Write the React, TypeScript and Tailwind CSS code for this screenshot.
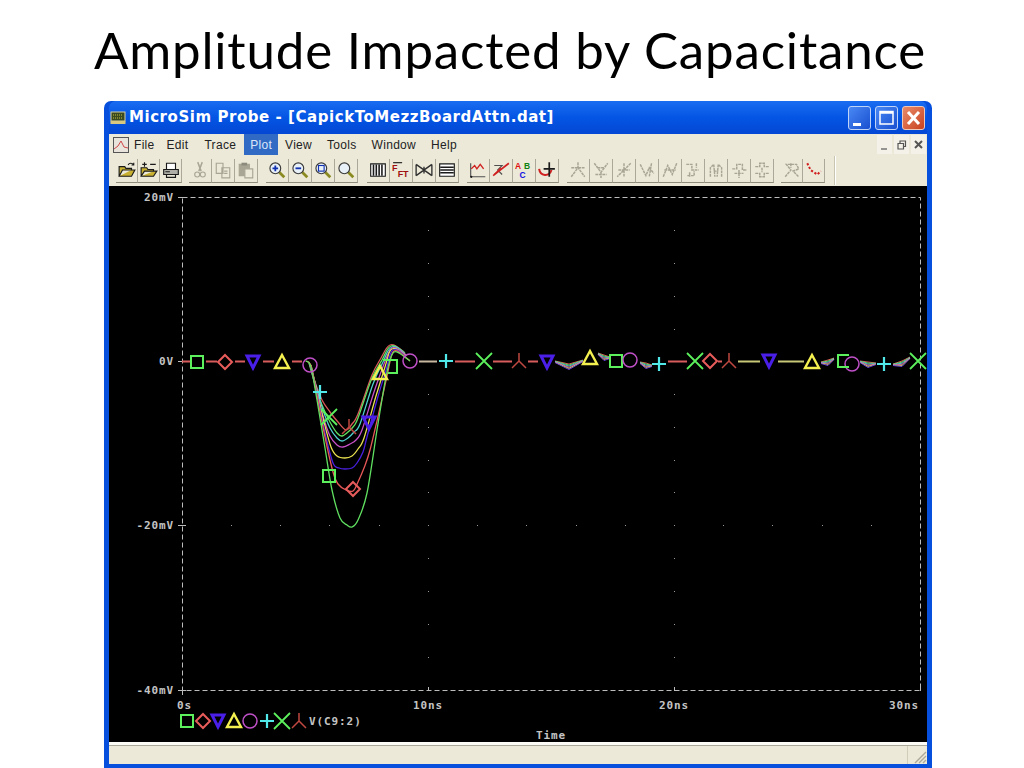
import type { ReactNode } from 'react'

const MONO = "font-['DejaVu_Sans_Mono','Liberation_Mono',monospace]"
const ICON_TEXT = "font-['Liberation_Sans',sans-serif] font-bold"

// plot colours, sampled from the screenshot
const GREEN = '#5cf05c'
const RED = '#e85c5c'
const BLUE = '#4a1fe8'
const YELLOW = '#f4f050'
const MAGENTA = '#c050c8'
const CYAN = '#50e8e8'

type MarkerKind = 'square' | 'diamond' | 'down' | 'up' | 'circle' | 'plus' | 'x' | 'y'

const MARKER_COLORS: Record<MarkerKind, string> = {
  square: GREEN,
  diamond: RED,
  down: BLUE,
  up: YELLOW,
  circle: MAGENTA,
  plus: CYAN,
  x: GREEN,
  y: '#c04840',
}

const MARKERS: [MarkerKind, number, number][] = [
  ['square', 197, 362],
  ['diamond', 225, 362],
  ['down', 253, 362],
  ['up', 282, 362],
  ['circle', 310, 365],
  ['plus', 320, 392],
  ['x', 329, 417],
  ['y', 349, 427],
  ['down', 369, 423],
  ['up', 380, 373],
  ['square', 329, 476],
  ['diamond', 353, 489],
  ['circle', 410, 361],
  ['plus', 446, 361],
  ['x', 484, 361],
  ['y', 519, 361],
  ['down', 547, 362],
  ['up', 590, 358],
  ['square', 616, 361],
  ['circle', 630, 360],
  ['plus', 659, 364],
  ['x', 695, 361],
  ['diamond', 710, 361],
  ['y', 729, 361],
  ['down', 769, 361],
  ['up', 812, 362],
  ['circle', 852, 364],
  ['plus', 884, 364],
  ['x', 918, 361],
]

const LEGEND: [MarkerKind, number][] = [
  ['square', 187],
  ['diamond', 203],
  ['down', 218],
  ['up', 234],
  ['circle', 250],
  ['plus', 267],
  ['x', 282],
  ['y', 299],
]

const TRACES: [string, number[][]][] = [
  ['#d85858', [[309, 362], [315, 382], [322, 400], [330, 412], [338, 422], [346, 430], [352, 424], [358, 414], [372, 375], [381, 358], [386, 349], [390, 345], [396, 346], [404, 352]]],
  ['#60e060', [[309, 363], [315, 384], [322, 405], [330, 422], [337, 433], [342, 436], [348, 432], [353, 427], [358, 418], [372, 378], [382, 360], [387, 350], [391, 346], [397, 347], [405, 353]]],
  ['#50d0d0', [[310, 364], [316, 386], [323, 410], [330, 428], [337, 438], [342, 441], [348, 438], [354, 432], [360, 424], [373, 384], [383, 362], [388, 351], [392, 347], [398, 348], [405, 354]]],
  ['#c850c8', [[310, 365], [316, 388], [323, 416], [330, 436], [337, 445], [343, 447], [350, 444], [356, 440], [362, 430], [374, 392], [384, 364], [389, 352], [392, 348], [398, 349], [406, 355]]],
  ['#e8e050', [[311, 365], [317, 392], [324, 422], [331, 447], [337, 456], [345, 458], [352, 456], [358, 449], [364, 438], [376, 396], [385, 367], [389, 353], [392, 349], [398, 350], [406, 356]]],
  ['#4a20e0', [[311, 366], [317, 394], [325, 433], [333, 463], [339, 468], [345, 469], [352, 468], [357, 463], [363, 452], [367, 437], [377, 400], [386, 370], [390, 355], [393, 350], [399, 351], [406, 357]]],
  ['#e85858', [[306, 361], [311, 366], [317, 396], [325, 437], [333, 472], [338, 484], [346, 490], [353, 491], [358, 482], [364, 468], [370, 450], [379, 412], [387, 376], [391, 357], [394, 351], [399, 352], [410, 361]]],
  ['#60e060', [[306, 361], [311, 367], [317, 400], [325, 448], [332, 490], [340, 518], [347, 525], [352, 527], [358, 520], [367, 493], [377, 430], [385, 382], [390, 360], [394, 352], [399, 353], [410, 361]]],
]

// Catmull-Rom through the sampled points, the scope draws smooth curves
function smooth(pts: number[][]) {
  let d = `M${pts[0][0]} ${pts[0][1]}`
  for (let i = 0; i < pts.length - 1; i++) {
    const p0 = pts[Math.max(i - 1, 0)]
    const p1 = pts[i]
    const p2 = pts[i + 1]
    const p3 = pts[Math.min(i + 2, pts.length - 1)]
    d += `C${p1[0] + (p2[0] - p0[0]) / 6} ${p1[1] + (p2[1] - p0[1]) / 6} ${p2[0] - (p3[0] - p1[0]) / 6} ${p2[1] - (p3[1] - p1[1]) / 6} ${p2[0]} ${p2[1]}`
  }
  return d
}

const FLAT: [string, number, number][] = [
  ['#d85c5c', 182, 190],
  ['#d85c5c', 206, 217],
  ['#d85c5c', 235, 245],
  ['#d85c5c', 263, 274],
  ['#d85c5c', 292, 302],
  ['#c8b8a0', 419, 437],
  ['#d85c5c', 455, 475],
  ['#d85c5c', 493, 512],
  ['#d85c5c', 528, 538],
  ['#d85c5c', 668, 687],
  ['#d85c5c', 718, 722],
  ['#c8c878', 738, 760],
  ['#c8c878', 778, 804],
]

const BAND = ['#d85858', '#60e060', '#50d0d0', '#c850c8', '#e8e050', '#6a40e0']

// short bundles of diverging traces between markers on the 0V line
const BUNDLES: [number, number, number, number, number, number][] = [
  [555, 361, 569, 364, 583, 360],
  [598, 353, 604, 355, 610, 357],
  [640, 362, 646, 363, 652, 365],
  [821, 362, 828, 360, 834, 358],
  [860, 361, 868, 362, 876, 363],
  [893, 364, 902, 361, 910, 357],
]

function Marker({ kind, x, y, color }: { kind: MarkerKind; x: number; y: number; color?: string }) {
  const c = color ?? MARKER_COLORS[kind]
  const p = { fill: 'none', stroke: c, strokeWidth: 2 }
  if (kind === 'square') return <rect x={x - 6} y={y - 6} width={12} height={12} {...p} />
  if (kind === 'diamond') return <path d={`M${x} ${y - 7}L${x + 7} ${y}L${x} ${y + 7}L${x - 7} ${y}Z`} {...p} />
  if (kind === 'down') return <path d={`M${x - 6} ${y - 6}H${x + 6}L${x} ${y + 6}Z`} {...p} strokeWidth={3} />
  if (kind === 'up') return <path d={`M${x} ${y - 7}L${x + 7} ${y + 6}H${x - 7}Z`} {...p} strokeWidth={2.4} />
  if (kind === 'circle') return <circle cx={x} cy={y} r={7} {...p} strokeWidth={1.5} />
  if (kind === 'plus') return <path d={`M${x - 7} ${y}H${x + 7}M${x} ${y - 7}V${y + 7}`} {...p} strokeWidth={2.2} />
  if (kind === 'x') return <path d={`M${x - 8} ${y - 8}L${x + 8} ${y + 8}M${x + 8} ${y - 8}L${x - 8} ${y + 8}`} {...p} strokeWidth={1.8} />
  return <path d={`M${x} ${y - 8}V${y}L${x - 7} ${y + 7}M${x} ${y}L${x + 7} ${y + 7}`} {...p} strokeWidth={1.5} />
}

function Label({ x, y, anchor = 'start', children }: { x: number; y: number; anchor?: 'start' | 'end' | 'middle'; children: string }) {
  return (
    <text x={x} y={y} textAnchor={anchor} className={`${MONO} fill-[#c4c4c4] text-[11px] font-bold tracking-[0.9px]`}>
      {children}
    </text>
  )
}

function Plot() {
  const hDots = [231, 280, 329, 379, 477, 526, 576, 625, 723, 772, 822, 871]
  const vDots = [230, 263, 296, 329, 394, 427, 460, 492, 558, 591, 624, 657]
  const dots: [number, number][] = []
  for (const x of hDots) dots.push([x, 525])
  for (const y of vDots) dots.push([428, y], [674, y])
  dots.push([428, 525], [674, 525])

  return (
    <svg viewBox="109 186 818 556" className="block h-full w-full bg-black">
      <rect x={182.5} y={197.5} width={738} height={493} fill="none" stroke="#bdbdbd" strokeDasharray="5 3" />
      <path d="M178 197.5H186M178 361.5H186M178 525.5H186M178 690.5H186M182.5 687V695M428.5 687V691M674.5 687V691M920.5 687V691" stroke="#bdbdbd" fill="none" />
      {dots.map(([x, y], i) => (
        <rect key={i} x={x} y={y} width={1} height={1} fill="#9a9a9a" />
      ))}

      <Label x={174} y={201} anchor="end">20mV</Label>
      <Label x={174} y={365} anchor="end">0V</Label>
      <Label x={174} y={529} anchor="end">-20mV</Label>
      <Label x={174} y={694} anchor="end">-40mV</Label>
      <Label x={177} y={709}>0s</Label>
      <Label x={413} y={709}>10ns</Label>
      <Label x={659} y={709}>20ns</Label>
      <Label x={889} y={709}>30ns</Label>
      <Label x={309} y={725}>V(C9:2)</Label>
      <Label x={536} y={739}>Time</Label>

      {FLAT.map(([c, a, b]) => (
        <path key={a} d={`M${a} 361.5H${b}`} stroke={c} strokeWidth={2} fill="none" />
      ))}
      {BUNDLES.map((b, i) =>
        BAND.map((c, j) => (
          <path
            key={`${i}-${c}`}
            d={`M${b[0]} ${b[1] + j * 0.3}L${b[2]} ${b[3] + j * 1.1}L${b[4]} ${b[5] + j * 0.3}`}
            stroke={c}
            fill="none"
          />
        )),
      )}
      {TRACES.map(([c, pts], i) => (
        <path key={i} d={smooth(pts)} stroke={c} strokeWidth={1.3} fill="none" />
      ))}

      {MARKERS.map(([k, x, y], i) => (
        <Marker key={i} kind={k} x={x} y={y} />
      ))}
      {/* two squares are only partly drawn over the curve */}
      <path d="M383 360H397V373H388" stroke={GREEN} strokeWidth={2} fill="none" />
      <path d="M849 355H838V367H849" stroke={GREEN} strokeWidth={2} fill="none" />
      {LEGEND.map(([k, x]) => (
        <Marker key={x} kind={k} x={x} y={721} />
      ))}
    </svg>
  )
}

const G = '#a8a594'
const K = '#1a1a1a'

function Icon({ children }: { children: ReactNode }) {
  return (
    <svg viewBox="0 0 16 16" className="h-[18px] w-[18px]" fill="none">
      {children}
    </svg>
  )
}

function Lens({ children }: { children?: ReactNode }) {
  return (
    <>
      <path d="M10 10L14.5 14.5" stroke="#8a8a20" strokeWidth={2.4} />
      <circle cx={6.5} cy={6.5} r={4.8} fill="#e8f0f8" stroke="#3a3a3a" />
      {children}
    </>
  )
}

function Cursor({ d }: { d: string }) {
  return (
    <Icon>
      <path d={d} stroke={G} strokeWidth={1.3} strokeDasharray="2.5 0.6" />
    </Icon>
  )
}

const GROUPS: { gap: number; width: number; icons: ReactNode[] }[] = [
  {
    gap: 0,
    width: 22,
    icons: [
      <Icon><path d="M1 13.5V5H6L7 6.5H12V8H4L1 13.5H12L15 8H12" fill="#c8b030" stroke={K} /><path d="M9 3.5C10 1.5 12.5 1.5 14 3.5M14 1.5V3.5H12" stroke={K} /></Icon>,
      <Icon><path d="M1 13.5V6H6L7 7.5H12V9H4L1 13.5H12L15 9H12" fill="#c8b030" stroke={K} /><path d="M4 1V5M2 3H6M9 3H14" stroke={K} /></Icon>,
      <Icon><path d="M4 7V2H12V7" fill="#fff" stroke={K} /><path d="M1.5 7.5H14.5V12H1.5Z" fill="#b0b0a8" stroke={K} /><path d="M4 12V14.5H12V12M3 9.5H7" stroke={K} /></Icon>,
    ],
  },
  {
    gap: 7,
    width: 23,
    icons: [
      <Icon><path d="M6 1L9 9M10 1L7 9" stroke={G} strokeWidth={1.3} /><circle cx={5.5} cy={12} r={2.2} stroke={G} /><circle cx={10.5} cy={12} r={2.2} stroke={G} /></Icon>,
      <Icon><path d="M2 2H8V11H2ZM7 6H14V15H7Z" fill="#ece9d8" stroke={G} /><path d="M9 9H12M9 11H12" stroke={G} /></Icon>,
      <Icon><path d="M2 3H11V13H2Z" fill={G} stroke={G} /><path d="M4 1.5H9V4H4Z" fill="#8c8a7c" /><path d="M7 7H14V15H7Z" fill="#ece9d8" stroke={G} /></Icon>,
    ],
  },
  {
    gap: 8,
    width: 23,
    icons: [
      <Icon><Lens><path d="M4 6.5H9M6.5 4V9" stroke="#1030b0" strokeWidth={1.6} /></Lens></Icon>,
      <Icon><Lens><path d="M4 6.5H9" stroke="#1030b0" strokeWidth={1.6} /></Lens></Icon>,
      <Icon><Lens><rect x={4} y={4} width={5} height={5} stroke="#1030b0" /></Lens></Icon>,
      <Icon><Lens /></Icon>,
    ],
  },
  {
    gap: 9,
    width: 23,
    icons: [
      <Icon><path d="M1.5 2.5H14.5V13.5H1.5Z" fill="#fff" stroke={K} /><path d="M4 3V13M6.5 3V13M9 3V13M11.5 3V13" stroke={K} strokeWidth={1.4} /></Icon>,
      <Icon>
        <path d="M1 1.5H9" stroke={K} />
        <text className={`${ICON_TEXT} fill-[#a01010] text-[8px]`}>
          <tspan x={0} y={9}>F</tspan>
          <tspan x={5} y={14}>FT</tspan>
        </text>
      </Icon>,
      <Icon><path d="M1 3L15 13M1 13L15 3M1 3V13M15 3V13M8 5V11" stroke="#303030" strokeWidth={1.2} /></Icon>,
      <Icon><path d="M1.5 2.5H14.5V13.5H1.5Z" fill="#fff" stroke={K} /><path d="M2 5.5H14M2 8H14M2 10.5H14" stroke={K} strokeWidth={1.3} /></Icon>,
    ],
  },
  {
    gap: 8,
    width: 23,
    icons: [
      <Icon><path d="M1.5 2V14H14.5" stroke="#505050" /><path d="M2 7L5 4L7 7L10 3L13 7" stroke="#d02020" strokeWidth={1.2} /><circle cx={2} cy={14} r={1} fill={K} /></Icon>,
      <Icon><path d="M2 4H9L5 8L9 12" stroke="#505050" /><path d="M1 13L15 2" stroke="#d02020" strokeWidth={1.5} /><path d="M2 12L8 6" stroke="#d02020" /></Icon>,
      <Icon>
        <text className={`${ICON_TEXT} text-[7.5px]`}>
          <tspan x={0} y={7} className="fill-[#e01010]">A</tspan>
          <tspan x={8} y={7} className="fill-[#108010]">B</tspan>
          <tspan x={4} y={15} className="fill-[#1010e0]">C</tspan>
        </text>
      </Icon>,
      <Icon><path d="M1 7C2 14 10 14 12 8" stroke="#d02020" strokeWidth={1.8} /><path d="M10 1L10 14M5 7H15" stroke={K} strokeWidth={1.5} /></Icon>,
    ],
  },
  {
    gap: 8,
    width: 23,
    icons: [
      <Cursor d="M8 1V6M2 14L8 6L14 14M2 6H14" />,
      <Cursor d="M2 2L8 10L14 2M8 10V15M5 6H11M3 12H13" />,
      <Cursor d="M14 2L2 14M8 2V14M3 8H13" />,
      <Cursor d="M2 3L7 13L10 6L14 11M12 2L10 14" />,
      <Cursor d="M2 14L6 4L10 12L14 2M3 8H13" />,
      <Cursor d="M2 3H7V8H13M3 13H9V9M11 2V6M5 10V14" />,
      <Cursor d="M3 14V6L6 3L7 14M13 14V6L10 3L9 14M6 9H10" />,
      <Cursor d="M2 7H6V3H11V8H15M4 11H12M8 8V15" />,
      <Cursor d="M2 5H6V2H10V5H14M2 11H6V14H10V11H14M8 6V10" />,
    ],
  },
  {
    gap: 7,
    width: 22,
    icons: [
      <Cursor d="M2 14L7 8L3 3H12L14 7L9 9L14 14M7 2V6" />,
      <Icon><path d="M2 2L5 8L8 10L11 12L14 9" stroke="#d02020" strokeDasharray="2 1.6" strokeWidth={1.8} /></Icon>,
    ],
  },
]

function Toolbar() {
  return (
    <div className="flex h-[31px] items-center bg-[#ece9d8] pl-[7px]">
      {GROUPS.map((group, i) => (
        <div key={i} className="flex" style={{ marginLeft: group.gap }}>
          {group.icons.map((icon, j) => (
            <div
              key={j}
              className="flex h-[24px] items-center justify-center border-r border-b border-r-[#aca899] border-b-[#8f8c7c]"
              style={{ width: group.width }}
            >
              {icon}
            </div>
          ))}
        </div>
      ))}
      <div className="ml-[9px] h-[29px] w-[2px] border-r border-l border-r-white border-l-[#c8c5b2]" />
    </div>
  )
}

const MENU_ITEMS: [string, string][] = [
  ['File', 'px-[5px]'],
  ['Edit', 'ml-[2px] px-[5px]'],
  ['Trace', 'ml-[6px] px-[5px]'],
  ['Plot', 'ml-[3px] bg-[#316ac5] px-[6px] text-[#dbe6f8]'],
  ['View', 'ml-[2px] px-[5px]'],
  ['Tools', 'ml-[5px] px-[5px]'],
  ['Window', 'ml-[5px] px-[5px]'],
  ['Help', 'ml-[5px] px-[5px]'],
]

function Menu() {
  return (
    <div className="flex h-[21px] items-center bg-[#ece9d8] pl-[4px] font-['Liberation_Sans',sans-serif] text-[12px] text-[#222]">
      <svg viewBox="0 0 16 16" className="h-4 w-4 shrink-0">
        <rect x={0.5} y={0.5} width={15} height={15} fill="#e8e4dc" stroke="#555" />
        <path d="M1 12L5 9L8 4L11 10L15 11" stroke="#d04848" fill="none" />
      </svg>
      {MENU_ITEMS.map(([item, cls]) => (
        <span key={item} className={`flex h-full items-center tracking-[0.3px] ${cls}`}>
          {item}
        </span>
      ))}
      <div className="ml-auto flex h-full items-center gap-[2px] pr-[1px]">
        <MdiButton d="M3 11H9" />
        <MdiButton d="M3 5.5H8.5V11H3ZM5 5.5V3H10.5V8.5H8.5" />
        <MdiButton d="M3 3L10 10M10 3L3 10" bold />
      </div>
    </div>
  )
}

function MdiButton({ d, bold }: { d: string; bold?: boolean }) {
  return (
    <div className="flex h-[19px] w-[15px] items-center justify-center bg-[#f4f2e8]">
      <svg viewBox="0 0 13 13" className="h-[13px] w-[13px]" fill="none">
        <path d={d} stroke="#555" strokeWidth={bold ? 2 : 1.2} />
      </svg>
    </div>
  )
}

function CaptionButton({ kind }: { kind: 'min' | 'max' | 'close' }) {
  const bg =
    kind === 'close'
      ? 'border-[#f0c8b8] bg-gradient-to-br from-[#e88a68] to-[#c8401c]'
      : 'border-[#c0d4f8] bg-gradient-to-br from-[#4a88f4] to-[#1a4fd0]'
  return (
    <div className={`flex h-[24px] w-[23px] items-center justify-center rounded-[3px] border ${bg}`}>
      <svg viewBox="0 0 21 22" className="h-[22px] w-[21px]" fill="none">
        {kind === 'min' && <path d="M4 17.5H12" stroke="#fff" strokeWidth={3} />}
        {kind === 'max' && <path d="M4 4.5H17V17H4Z M4 6H17" stroke="#fff" strokeWidth={1.5} />}
        {kind === 'close' && <path d="M5 5L16 17M16 5L5 17" stroke="#fff" strokeWidth={3} />}
      </svg>
    </div>
  )
}

export default function App() {
  return (
    <div className="flex h-[768px] w-[1024px] flex-col overflow-hidden bg-white">
      <h1 className="flex h-[101px] shrink-0 items-center justify-center pr-[4px] pb-[2px] font-['Lato','Open_Sans',sans-serif] text-[51px] leading-none font-normal tracking-[0.85px] text-black">
        Amplitude Impacted by Capacitance
      </h1>

      <div className="ml-[104px] flex h-[667px] w-[828px] flex-col rounded-t-[7px] bg-[#0650dd] px-[5px] pb-[4px]">
        <div className="flex h-[33px] shrink-0 items-center rounded-t-[7px] bg-gradient-to-b from-[#1a6cf0] via-[#0555e4] to-[#0447d4] pr-[2px] pl-[1px]">
          <svg viewBox="0 0 16 16" className="mr-[3px] h-[16px] w-[16px] shrink-0">
            <rect x={1} y={2} width={14} height={9} fill="#3a4a20" stroke="#d8d0a0" />
            <path d="M3 5H13M3 8H13" stroke="#c8c040" strokeDasharray="1 1" />
            <rect x={0.5} y={11} width={15} height={3} fill="#d8c880" />
          </svg>
          <span className="font-['DejaVu_Sans',sans-serif] text-[15px] font-bold tracking-[0.55px] text-white">
            MicroSim Probe - [CapickToMezzBoardAttn.dat]
          </span>
          <div className="ml-auto flex items-center gap-[4px]">
            <CaptionButton kind="min" />
            <CaptionButton kind="max" />
            <CaptionButton kind="close" />
          </div>
        </div>

        <Menu />
        <Toolbar />

        <div className="h-[556px] shrink-0">
          <Plot />
        </div>

        <div className="h-[3px] shrink-0 bg-[#fbfaf4]" />
        <div className="flex flex-1 items-stretch border-t border-[#aca899] bg-[#ece9d8]">
          <div className="flex-1 border-r border-[#d0cdb8]" />
          <div className="relative w-[19px]">
            <svg viewBox="0 0 14 14" className="absolute right-0 bottom-0 h-[14px] w-[14px]" fill="none">
              <path d="M13 2L2 13M13 6L6 13M13 10L10 13" stroke="#aca899" strokeWidth={1.4} />
            </svg>
          </div>
        </div>
      </div>
    </div>
  )
}
